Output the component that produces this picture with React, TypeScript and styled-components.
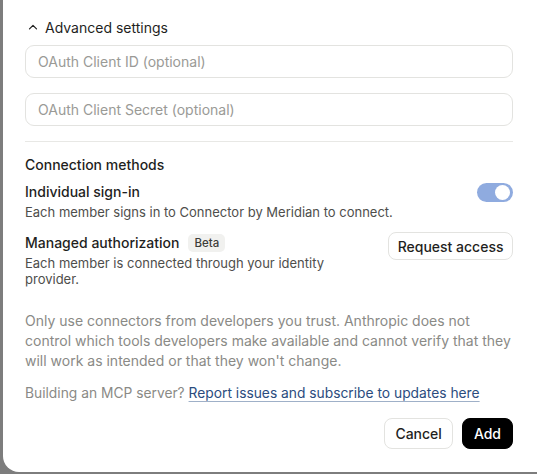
import styled, { createGlobalStyle } from "styled-components";

const Global = createGlobalStyle`
  html, body {
    margin: 0;
    padding: 0;
    background: #7d7d7d;
    height: 474px;
    overflow: hidden;
  }
  body {
    font-family: Inter, "Noto Sans", sans-serif;
    color: #1f1f1e;
    -webkit-font-smoothing: antialiased;
  }
`;

const Dialog = styled.div`
  margin-left: 3px;
  width: 560px;
  height: 472px;
  background: #fff;
  border-radius: 0 0 16px 16px;
  box-sizing: border-box;
  padding: 16px 0 0 22px;
`;

const Inner = styled.div`
  width: 488px;
  display: flex;
  flex-direction: column;
`;

const Disclosure = styled.button`
  display: flex;
  align-items: center;
  gap: 7px;
  background: none;
  border: 0;
  padding: 0 0 0 3px;
  font: inherit;
  font-size: 14px;
  color: #1f1f1e;
  height: 22px;
  cursor: pointer;
`;

const Field = styled.input`
  box-sizing: border-box;
  height: 33px;
  width: 100%;
  border: 1px solid #e3e3e0;
  border-radius: 9px;
  padding: 0 12px;
  font: inherit;
  font-size: 14px;
  color: #1f1f1e;
  outline: none;
  &::placeholder {
    color: #9a9a96;
  }
`;

const Fields = styled.div`
  display: flex;
  flex-direction: column;
  gap: 15px;
  margin-top: 7px;
`;

const Divider = styled.hr`
  border: 0;
  border-top: 1px solid #e8e8e5;
  margin: 15px 0 0;
`;

const SectionTitle = styled.div`
  font-size: 14px;
  font-weight: 500;
  margin-top: 13px;
  line-height: 20px;
`;

const Method = styled.div<{ $gap: number }>`
  display: flex;
  justify-content: space-between;
  align-items: flex-start;
  margin-top: ${(p) => p.$gap}px;
`;

const MethodText = styled.div`
  display: flex;
  flex-direction: column;
`;

const MethodName = styled.div`
  display: flex;
  align-items: center;
  gap: 9px;
  font-size: 14px;
  font-weight: 500;
  line-height: 24px;
`;

const MethodDesc = styled.div<{ $width?: number }>`
  font-size: 13px;
  color: #4e4e4b;
  line-height: 16px;
  max-width: ${(p) => (p.$width ? `${p.$width}px` : "none")};
`;

const Badge = styled.span`
  font-size: 11.5px;
  font-weight: 500;
  color: #3d3d3a;
  background: #f1f1ef;
  border-radius: 5px;
  padding: 2px 6px;
  line-height: 14px;
`;

const Toggle = styled.div<{ $on?: boolean }>`
  width: 36px;
  height: 19px;
  border-radius: 10px;
  background: ${(p) => (p.$on ? "#8fabdf" : "#d6d6d3")};
  position: relative;
  margin-top: 3px;
  &::after {
    content: "";
    position: absolute;
    top: 2px;
    left: ${(p) => (p.$on ? "18px" : "2px")};
    width: 15px;
    height: 15px;
    border-radius: 50%;
    background: #fff;
  }
`;

const Button = styled.button<{ $primary?: boolean; $h: number; $pad: number; $top?: number }>`
  font: inherit;
  font-size: 14px;
  font-weight: 500;
  height: ${(p) => p.$h}px;
  padding: 0 ${(p) => p.$pad}px;
  margin-top: ${(p) => p.$top ?? 0}px;
  border-radius: 8px;
  border: 1px solid ${(p) => (p.$primary ? "#000" : "#e3e3e0")};
  background: ${(p) => (p.$primary ? "#000" : "#fff")};
  color: ${(p) => (p.$primary ? "#fff" : "#1f1f1e")};
  cursor: pointer;
`;

const Notice = styled.p`
  margin: 24px 0 0;
  font-size: 14px;
  line-height: 20px;
  color: #8a8a86;
  white-space: nowrap;
`;

const Help = styled.p`
  margin: 12px 0 0;
  font-size: 13.8px;
  line-height: 20px;
  color: #8a8a86;
`;

const Link = styled.a`
  color: #2b4c7e;
  text-decoration: underline;
  text-decoration-color: #9fb0c8;
  text-underline-offset: 3px;
`;

const Footer = styled.div`
  display: flex;
  justify-content: flex-end;
  gap: 9px;
  margin-top: 15px;
`;

export default function App() {
  return (
    <>
      <Global />
      <Dialog>
        <Inner>
          <Disclosure>
            <svg width="10" height="10" viewBox="0 0 10 10" fill="none">
              <path d="M1.5 6.8 5 3.3l3.5 3.5" stroke="#1f1f1e" strokeWidth="1.2" strokeLinecap="round" strokeLinejoin="round" />
            </svg>
            Advanced settings
          </Disclosure>
          <Fields>
            <Field placeholder="OAuth Client ID (optional)" />
            <Field placeholder="OAuth Client Secret (optional)" />
          </Fields>
          <Divider />
          <SectionTitle>Connection methods</SectionTitle>
          <Method $gap={5}>
            <MethodText>
              <MethodName>Individual sign-in</MethodName>
              <MethodDesc>Each member signs in to Connector by Meridian to connect.</MethodDesc>
            </MethodText>
            <Toggle $on />
          </Method>
          <Method $gap={11}>
            <MethodText>
              <MethodName>
                Managed authorization <Badge>Beta</Badge>
              </MethodName>
              <MethodDesc $width={310}>Each member is connected through your identity provider.</MethodDesc>
            </MethodText>
            <Button $h={28} $pad={8.5} $top={1}>
              Request access
            </Button>
          </Method>
          <Notice>
            Only use connectors from developers you trust. Anthropic does not
            <br />
            control which tools developers make available and cannot verify that they
            <br />
            will work as intended or that they won't change.
          </Notice>
          <Help>
            Building an MCP server? <Link href="#">Report issues and subscribe to updates here</Link>
          </Help>
          <Footer>
            <Button $h={31} $pad={10}>
              Cancel
            </Button>
            <Button $primary $h={31} $pad={11}>
              Add
            </Button>
          </Footer>
        </Inner>
      </Dialog>
    </>
  );
}
